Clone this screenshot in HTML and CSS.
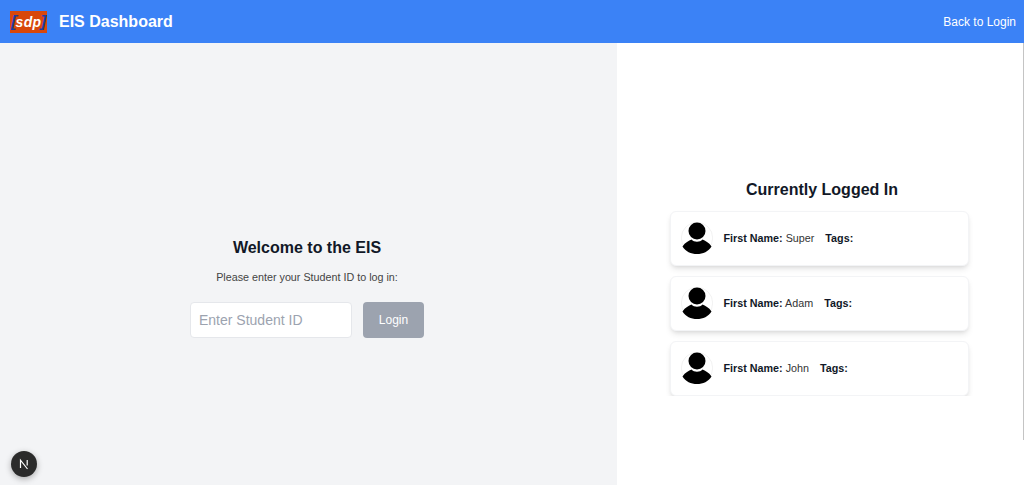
FILE: index.html

```html
<!DOCTYPE html>
<html lang="en">
<head>
    <meta charset="UTF-8">
    <meta name="viewport" content="width=device-width, initial-scale=1.0">
    <title>EIS Dashboard</title>
    <link rel="stylesheet" href="styles.css">
</head>
<body>
    <!-- Header -->
    <header class="top-bar">
        <div class="brand">
            <div class="logo"><span class="logo-bracket">[</span><span class="logo-text">sdp</span><span class="logo-bracket">]</span></div>
            <h1 class="brand-title">EIS Dashboard</h1>
        </div>
        <a class="back-link" href="#">Back to Login</a>
    </header>

    <main class="panels">
        <!-- Login Panel -->
        <section class="login-panel">
            <h2 class="login-title">Welcome to the EIS</h2>
            <p class="login-hint">Please enter your Student ID to log in:</p>
            <form class="login-form">
                <input class="login-input" type="text" placeholder="Enter Student ID">
                <button class="login-button" type="button">Login</button>
            </form>
        </section>

        <!-- Logged In Panel -->
        <section class="users-panel">
            <h2 class="users-title">Currently Logged In</h2>
            <div class="user-list">
                <div class="user-card">
                    <svg class="avatar" viewBox="0 0 32 32"><circle cx="16" cy="16" r="15.7" fill="#fff" stroke="#e5e5e5" stroke-width="0.5"/><circle cx="16" cy="9" r="8.5"/><path d="M1.5 24.5C4 20.5 8 18.5 10.5 17.5C13 20.5 19 20.5 21.5 17.5C24 18.5 28 20.5 30.5 24.5C27.5 29.5 22 32 16 32C10 32 4.5 29.5 1.5 24.5Z"/></svg>
                    <p class="user-info"><strong>First Name:</strong> <span class="user-name">Super</span> <strong class="user-tags">Tags:</strong></p>
                </div>
                <div class="user-card">
                    <svg class="avatar" viewBox="0 0 32 32"><circle cx="16" cy="16" r="15.7" fill="#fff" stroke="#e5e5e5" stroke-width="0.5"/><circle cx="16" cy="9" r="8.5"/><path d="M1.5 24.5C4 20.5 8 18.5 10.5 17.5C13 20.5 19 20.5 21.5 17.5C24 18.5 28 20.5 30.5 24.5C27.5 29.5 22 32 16 32C10 32 4.5 29.5 1.5 24.5Z"/></svg>
                    <p class="user-info"><strong>First Name:</strong> <span class="user-name">Adam</span> <strong class="user-tags">Tags:</strong></p>
                </div>
                <div class="user-card">
                    <svg class="avatar" viewBox="0 0 32 32"><circle cx="16" cy="16" r="15.7" fill="#fff" stroke="#e5e5e5" stroke-width="0.5"/><circle cx="16" cy="9" r="8.5"/><path d="M1.5 24.5C4 20.5 8 18.5 10.5 17.5C13 20.5 19 20.5 21.5 17.5C24 18.5 28 20.5 30.5 24.5C27.5 29.5 22 32 16 32C10 32 4.5 29.5 1.5 24.5Z"/></svg>
                    <p class="user-info"><strong>First Name:</strong> <span class="user-name">John</span> <strong class="user-tags">Tags:</strong></p>
                </div>
            </div>
        </section>
    </main>

    <!-- Dev badge -->
    <div class="dev-badge">
        <svg viewBox="0 0 14 14" width="14" height="14"><path d="M3.5 11V3.2L10.5 12M10.2 3V8.5" fill="none" stroke="#fff" stroke-width="1.2"/></svg>
    </div>
</body>
</html>
```

FILE: styles.css

```css
* {
    box-sizing: border-box;
}

body {
    font-family: "Liberation Sans", Arial, sans-serif;
    margin: 0;
    height: 485px;
    overflow: hidden;
    display: flex;
    flex-direction: column;
    color: #111827;
}

.top-bar {
    background-color: #3b82f6;
    color: #fff;
    height: 43px;
    padding: 0 8px 0 10px;
    display: flex;
    justify-content: space-between;
    align-items: center;
}

.brand {
    display: flex;
    align-items: center;
    gap: 12px;
}

.logo {
    width: 37px;
    height: 22px;
    background-color: #d8470b;
    display: flex;
    align-items: center;
    justify-content: center;
    overflow: hidden;
    font-style: italic;
    font-weight: 700;
    font-size: 14px;
    line-height: 1;
}

.logo-bracket {
    color: #1e3a9f;
    font-size: 17px;
    margin: 0 -1px;
}

.logo-text {
    color: #fff;
    letter-spacing: 0.3px;
}

.brand-title {
    font-size: 16px;
    font-weight: 700;
    margin: 0;
}

.back-link {
    color: #fff;
    text-decoration: none;
    font-size: 12px;
}

.panels {
    flex: 1;
    display: flex;
    min-height: 0;
}

.login-panel {
    width: 617px;
    background-color: #f3f4f6;
    display: flex;
    flex-direction: column;
    align-items: center;
    justify-content: center;
    padding: 49px 3px 0 0;
}

.login-title {
    font-size: 16px;
    font-weight: 700;
    margin: 0 0 14px;
}

.login-hint {
    font-size: 10.75px;
    color: #444;
    margin: 0 0 19px;
}

.login-form {
    display: flex;
    gap: 11px;
}

.login-input {
    width: 162px;
    height: 36px;
    padding: 0 8px;
    border: 1px solid #e5e7eb;
    border-radius: 4px;
    font-family: inherit;
    font-size: 14px;
    outline: none;
}

.login-input::placeholder {
    color: #9ca3af;
}

.login-button {
    width: 61px;
    height: 36px;
    background-color: #9ca3af;
    color: #fff;
    border: none;
    border-radius: 4px;
    font-family: inherit;
    font-size: 12px;
}

.users-panel {
    flex: 1;
    height: 397px;
    border-right: 1px solid #c4c4c4;
    display: flex;
    flex-direction: column;
    align-items: center;
    overflow: hidden;
}

.users-title {
    font-size: 16px;
    font-weight: 700;
    margin: 138px 0 8px 4px;
}

/* third card is cut off at the bottom of the list */
.user-list {
    display: flex;
    flex-direction: column;
    gap: 10px;
    padding: 4px 4px 0;
    margin-right: 2px;
    height: 189px;
    overflow: hidden;
}

.user-card {
    width: 299px;
    height: 55px;
    flex-shrink: 0;
    background: #fff;
    border: 1px solid #f3f4f6;
    border-radius: 6px;
    box-shadow: 0 4px 6px -1px rgba(0, 0, 0, 0.1), 0 2px 4px -2px rgba(0, 0, 0, 0.1);
    padding: 0 10px 2px;
    display: flex;
    align-items: center;
    gap: 11px;
}

.avatar {
    width: 32px;
    height: 32px;
}

.user-info {
    font-size: 10.75px;
    margin: 0;
}

.user-name {
    color: #333;
}

.user-tags {
    margin-left: 8px;
}

.dev-badge {
    position: fixed;
    left: 11px;
    bottom: 8px;
    width: 26px;
    height: 26px;
    background-color: #2b2b2b;
    border-radius: 50%;
    box-shadow: 0 2px 6px rgba(0, 0, 0, 0.3);
    display: flex;
    align-items: center;
    justify-content: center;
}
```
